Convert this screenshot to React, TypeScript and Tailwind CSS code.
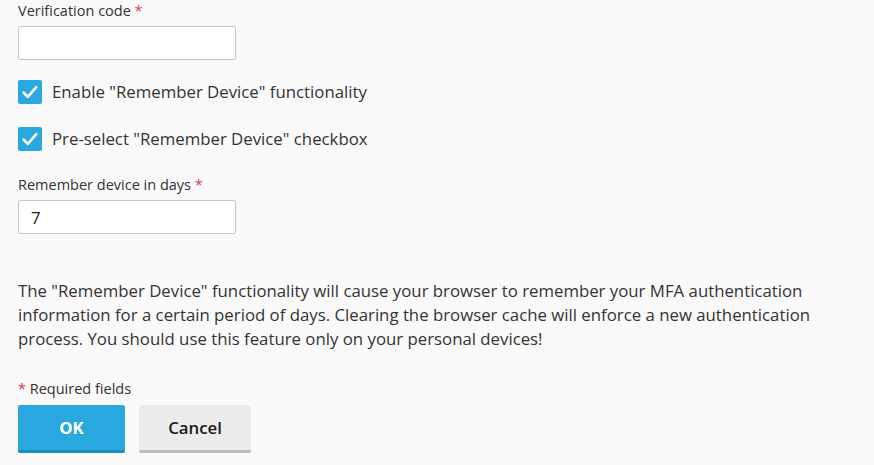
import React from "react";

function Check() {
  return (
    <span className="flex h-6 w-6 shrink-0 items-center justify-center rounded-[2px] bg-[#29a8e0]">
      <svg width="24" height="24" viewBox="0 0 24 24" fill="none">
        <path d="M5.5 12.5l4.3 4.3 8.4-9.6" stroke="#fff" strokeWidth="2.6" strokeLinecap="round" strokeLinejoin="round" />
      </svg>
    </span>
  );
}

export default function App() {
  return (
    <div
      className="min-h-screen bg-[#fafafa] px-[18px] pt-[1px] text-[#333]"
      style={{ fontFamily: '"Open Sans", "Noto Sans", sans-serif' }}
    >
      <div className="h-5 text-[14.5px] leading-5">
        Verification code <span className="text-[#d2435b]">*</span>
      </div>
      <input
        className="mt-[5px] block h-[34px] w-[218px] rounded-[2px] border border-[#c8c8c8] bg-white px-3 text-[16.8px] outline-none"
        defaultValue=""
      />
      <label className="mt-[20px] flex h-6 items-center gap-[10px] text-[16.8px]">
        <Check />
        <span>Enable "Remember Device" functionality</span>
      </label>
      <label className="mt-[23px] flex h-6 items-center gap-[10px] text-[16.8px]">
        <Check />
        <span>Pre-select "Remember Device" checkbox</span>
      </label>
      <div className="mt-[24px] h-5 text-[14.5px] leading-5">
        Remember device in days <span className="text-[#d2435b]">*</span>
      </div>
      <input
        className="mt-[5px] block h-[34px] w-[218px] rounded-[2px] border border-[#c8c8c8] bg-white px-3 text-[16.8px] text-[#222] outline-none"
        defaultValue="7"
      />
      <p className="mt-[45px] text-[16.8px] leading-6">
        The "Remember Device" functionality will cause your browser to remember your MFA authentication information for a
        certain period of days. Clearing the browser cache will enforce a new authentication process. You should use this
        feature only on your personal devices!
      </p>
      <div className="mt-[28px] h-5 text-[14.5px] leading-5">
        <span className="text-[#d2435b]">*</span> Required fields
      </div>
      <div className="mt-[6px] flex gap-[14px]">
        <button className="h-[48px] w-[107px] rounded-[2px] border-b-[3px] border-[#1d8cbf] bg-[#29a8e0] text-[16.8px] font-bold text-white">
          OK
        </button>
        <button className="h-[48px] w-[112px] rounded-[2px] border-b-[3px] border-[#bdbdbd] bg-[#ececec] text-[16.8px] font-semibold text-[#1a1a1a]">
          Cancel
        </button>
      </div>
    </div>
  );
}
